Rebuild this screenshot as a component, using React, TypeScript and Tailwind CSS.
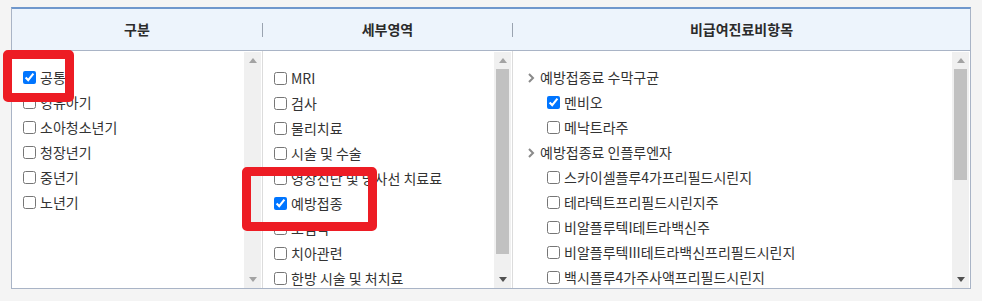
import React from "react";

const font = { fontFamily: '"Noto Sans CJK KR", "Noto Sans", sans-serif' };

function Arrow({ dir, dark }: { dir: "up" | "down"; dark?: boolean }) {
  return (
    <div className="h-[17px] w-[17px] flex items-center justify-center">
      <svg width="8" height="5" viewBox="0 0 8 5">
        {dir === "up" ? (
          <polygon points="0,5 8,5 4,0" fill={dark ? "#505050" : "#a3a3a3"} />
        ) : (
          <polygon points="0,0 8,0 4,5" fill={dark ? "#505050" : "#a3a3a3"} />
        )}
      </svg>
    </div>
  );
}

function ScrollBar({ thumb }: { thumb?: string }) {
  return (
    <div className="w-[17px] mt-[1px] mr-[1px] bg-[#f0f0f0] flex flex-col shrink-0">
      <Arrow dir="up" />
      <div className="flex-1 px-[2px]">
        {thumb && <div className={`bg-[#c1c1c1] ${thumb}`} />}
      </div>
      <Arrow dir="down" dark={!!thumb} />
    </div>
  );
}

function Check({ label, checked, indent }: { label: string; checked?: boolean; indent?: string }) {
  return (
    <label className={`h-[25px] flex items-center whitespace-nowrap ${indent ?? "pl-[11px]"}`}>
      <input type="checkbox" defaultChecked={checked} className="w-[13px] h-[13px] m-0 mr-[4px] shrink-0" />
      <span>{label}</span>
    </label>
  );
}

function Group({ label }: { label: string }) {
  return (
    <div className="h-[25px] flex items-center pl-[14px] whitespace-nowrap">
      <svg width="9" height="10" viewBox="0 0 9 10" className="mr-[4px] shrink-0">
        <polyline points="2,1 6,5 2,9" fill="none" stroke="#8a8a8a" strokeWidth="2" />
      </svg>
      <span>{label}</span>
    </div>
  );
}

export default function App() {
  return (
    <div className="relative w-[982px] h-[301px] bg-[#f4f4f4] pt-[7px] pl-[11px] text-[14px] text-[#333]" style={font}>
      <div className="w-[960px] h-[282px] border-t-2 border-t-[#6f97cc] border-x border-b border-x-[#a9b4c6] border-b-[#a9b4c6] bg-white flex flex-col">
        {/* header */}
        <div className="h-[42px] bg-[#edf4fc] border-b border-[#a9b4c6] flex items-center font-semibold text-[#2b2b2b] shrink-0">
          <div className="w-[250px] text-center">구분</div>
          <div className="w-px h-[14px] bg-[#9aa3b0]" />
          <div className="w-[249px] text-center">세부영역</div>
          <div className="w-px h-[14px] bg-[#9aa3b0]" />
          <div className="flex-1 text-center">비급여진료비항목</div>
        </div>

        {/* body */}
        <div className="flex-1 flex min-h-0">
          <div className="w-[251px] border-r border-[#dcdcdc] flex">
            <div className="flex-1 overflow-hidden pt-[14px]">
              <Check label="공통" checked />
              <Check label="영유아기" />
              <Check label="소아청소년기" />
              <Check label="청장년기" />
              <Check label="중년기" />
              <Check label="노년기" />
            </div>
            <ScrollBar />
          </div>

          <div className="w-[250px] border-r border-[#dcdcdc] flex">
            <div className="flex-1 overflow-hidden pt-[15px]">
              <Check label="MRI" />
              <Check label="검사" />
              <Check label="물리치료" />
              <Check label="시술 및 수술" />
              <Check label="영상진단 및 방사선 치료료" />
              <Check label="예방접종" checked />
              <Check label="보험약" />
              <Check label="치아관련" />
              <Check label="한방 시술 및 처치료" />
            </div>
            <ScrollBar thumb="h-[185px]" />
          </div>

          <div className="flex-1 flex">
            <div className="flex-1 overflow-hidden pt-[14px]">
              <Group label="예방접종료 수막구균" />
              <Check label="멘비오" checked indent="pl-[34px]" />
              <Check label="메낙트라주" indent="pl-[34px]" />
              <Group label="예방접종료 인플루엔자" />
              <Check label="스카이셀플루4가프리필드시린지" indent="pl-[34px]" />
              <Check label="테라텍트프리필드시린지주" indent="pl-[34px]" />
              <Check label="비알플루텍I테트라백신주" indent="pl-[34px]" />
              <Check label="비알플루텍III테트라백신프리필드시린지" indent="pl-[34px]" />
              <Check label="백시플루4가주사액프리필드시린지" indent="pl-[34px]" />
            </div>
            <ScrollBar thumb="h-[111px]" />
          </div>
        </div>
      </div>

      {/* annotation boxes */}
      <div className="absolute left-[3px] top-[50px] w-[71px] h-[52px] border-[9px] border-[#ed1c24] rounded-[5px]" />
      <div className="absolute left-[242px] top-[167px] w-[135px] h-[64px] border-[9px] border-[#ed1c24] rounded-[5px]" />
    </div>
  );
}
